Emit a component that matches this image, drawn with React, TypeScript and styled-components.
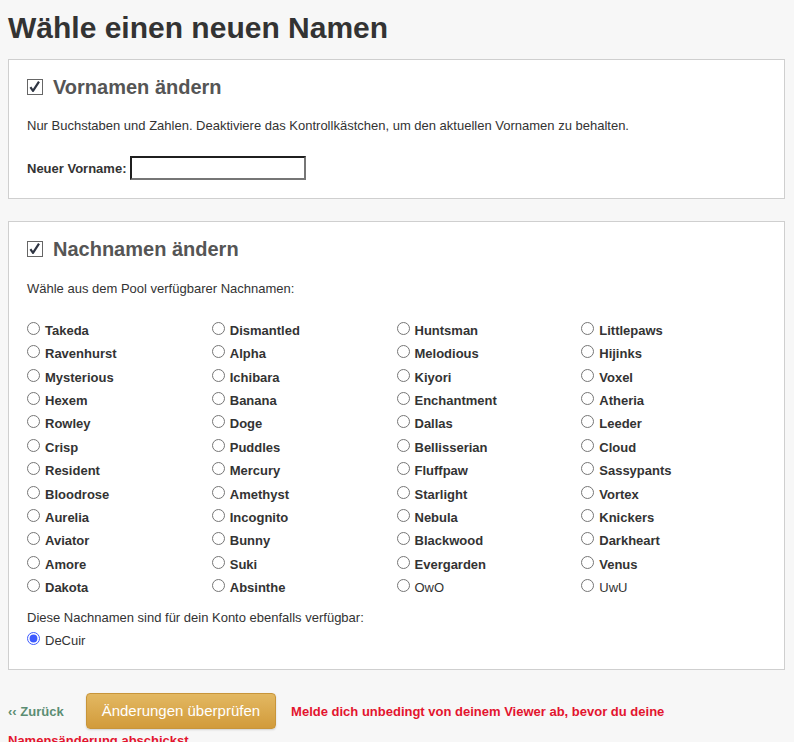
import React, { useState } from 'react';
import styled, { createGlobalStyle } from 'styled-components';

const GlobalStyle = createGlobalStyle`
  body {
    margin: 0;
    background-color: #f7f7f7;
    font-family: "Liberation Sans", Arial, sans-serif;
    color: #333;
  }
`;

const Page = styled.div`
  padding: 11px 9px 0 8px;
`;

const Title = styled.h1`
  margin: 0 0 14px;
  font-size: 30px;
  line-height: 34px;
  font-weight: bold;
  color: #333;
`;

const Panel = styled.section<{ $bottom: number }>`
  background-color: #fff;
  border: 1px solid #cfcfcf;
  padding: 15px 18px ${(props) => props.$bottom}px;
  margin-bottom: 22px;
`;

const PanelHeading = styled.h2`
  display: flex;
  align-items: center;
  gap: 10px;
  margin: 0;
  font-size: 20px;
  line-height: 24px;
  font-weight: bold;
  color: #555;
`;

const CheckBox = styled.span`
  display: inline-flex;
  width: 16px;
  height: 16px;
  box-sizing: border-box;
  border: 1.5px solid #666;
  background-color: #fff;
  cursor: pointer;
`;

const Hint = styled.p<{ $top: number }>`
  margin: ${(props) => props.$top}px 0 0;
  font-size: 13px;
  line-height: 23.4px;
  color: #333;
`;

const FieldRow = styled.div`
  display: flex;
  align-items: center;
  margin-top: 19px;
`;

const FieldLabel = styled.label`
  font-size: 13px;
  font-weight: bold;
  color: #333;
`;

const TextInput = styled.input`
  width: 176px;
  height: 24px;
  box-sizing: border-box;
  margin-left: 4px;
  padding: 1px 4px;
  border-style: solid;
  border-width: 2px;
  border-color: #1f1f1f #767676 #767676 #1f1f1f;
  font-family: inherit;
  font-size: 13px;
  outline: none;
`;

const NameGrid = styled.div`
  display: grid;
  grid-template-columns: repeat(4, 1fr);
  margin-top: 18px;
`;

const NameOption = styled.label<{ $bold: boolean }>`
  display: block;
  font-size: 13px;
  line-height: 23.4px;
  font-weight: ${(props) => (props.$bold ? 'bold' : 'normal')};
  color: #333;
  white-space: nowrap;
  cursor: pointer;
`;

const Radio = styled.input`
  width: 13px;
  height: 13px;
  margin: 3px 5px 0 0;
  accent-color: #3d5afe;
  vertical-align: baseline;
  cursor: pointer;
`;

const Footer = styled.div`
  margin-top: 23px;
  padding-right: 12px;
  font-size: 13px;
  line-height: 23.4px;
`;

const BackLink = styled.a`
  color: #5b8d73;
  font-weight: bold;
  text-decoration: none;
`;

const SubmitButton = styled.button`
  display: inline-block;
  margin: 0 15px 0 22px;
  padding: 8px 15px;
  border: 1px solid #c8953a;
  border-radius: 4px;
  background: linear-gradient(to bottom, #e3b862, #d29b3b);
  color: #fff;
  font-family: inherit;
  font-size: 15px;
  line-height: 18px;
  box-shadow: 0 1px 2px rgba(0, 0, 0, 0.15);
  cursor: pointer;
`;

const Warning = styled.span`
  color: #e3142e;
  font-weight: bold;
`;

const pool = [
  'Takeda', 'Dismantled', 'Huntsman', 'Littlepaws',
  'Ravenhurst', 'Alpha', 'Melodious', 'Hijinks',
  'Mysterious', 'Ichibara', 'Kiyori', 'Voxel',
  'Hexem', 'Banana', 'Enchantment', 'Atheria',
  'Rowley', 'Doge', 'Dallas', 'Leeder',
  'Crisp', 'Puddles', 'Bellisserian', 'Cloud',
  'Resident', 'Mercury', 'Fluffpaw', 'Sassypants',
  'Bloodrose', 'Amethyst', 'Starlight', 'Vortex',
  'Aurelia', 'Incognito', 'Nebula', 'Knickers',
  'Aviator', 'Bunny', 'Blackwood', 'Darkheart',
  'Amore', 'Suki', 'Evergarden', 'Venus',
  'Dakota', 'Absinthe', 'OwO', 'UwU',
];

const plainNames = ['OwO', 'UwU'];

const Check = () => (
  <svg width="13" height="13" viewBox="0 0 13 13">
    <path d="M2.4 7.2 L5 10.8 L11 1.6" fill="none" stroke="#2e3442" strokeWidth="2.2" strokeLinejoin="round" />
  </svg>
);

const App: React.FC = () => {
  const [surname, setSurname] = useState('DeCuir');
  const [firstName, setFirstName] = useState('');

  return (
    <Page>
      <GlobalStyle />
      <Title>Wähle einen neuen Namen</Title>

      <Panel $bottom={18}>
        <PanelHeading>
          <CheckBox><Check /></CheckBox>
          Vornamen ändern
        </PanelHeading>
        <Hint $top={15}>
          Nur Buchstaben und Zahlen. Deaktiviere das Kontrollkästchen, um den aktuellen Vornamen zu behalten.
        </Hint>
        <FieldRow>
          <FieldLabel htmlFor="firstname">Neuer Vorname:</FieldLabel>
          <TextInput id="firstname" type="text" value={firstName} onChange={(e) => setFirstName(e.target.value)} />
        </FieldRow>
      </Panel>

      <Panel $bottom={16}>
        <PanelHeading>
          <CheckBox><Check /></CheckBox>
          Nachnamen ändern
        </PanelHeading>
        <Hint $top={16}>Wähle aus dem Pool verfügbarer Nachnamen:</Hint>
        <NameGrid>
          {pool.map((name) => (
            <NameOption key={name} $bold={!plainNames.includes(name)}>
              <Radio
                type="radio"
                name="surname"
                checked={surname === name}
                onChange={() => setSurname(name)}
              />
              {name}
            </NameOption>
          ))}
        </NameGrid>
        <Hint $top={6}>Diese Nachnamen sind für dein Konto ebenfalls verfügbar:</Hint>
        <NameOption $bold={false}>
          <Radio
            type="radio"
            name="surname"
            checked={surname === 'DeCuir'}
            onChange={() => setSurname('DeCuir')}
          />
          DeCuir
        </NameOption>
      </Panel>

      <Footer>
        <BackLink href="#">‹‹ Zurück</BackLink>
        <SubmitButton type="button">Änderungen überprüfen</SubmitButton>
        <Warning>Melde dich unbedingt von deinem Viewer ab, bevor du deine Namensänderung abschickst</Warning>
      </Footer>
    </Page>
  );
};

export default App;
